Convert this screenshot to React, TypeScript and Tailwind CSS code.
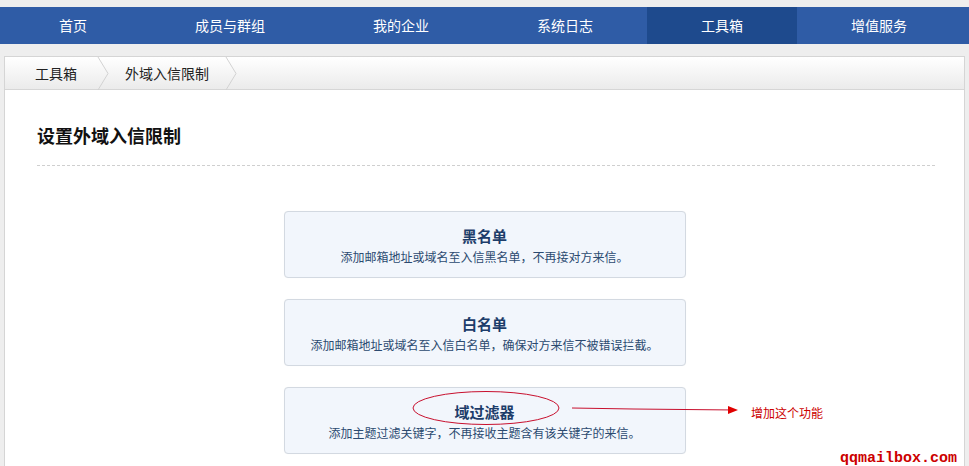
import React from "react";

const CJK = '"Noto Sans CJK SC", "Liberation Sans", sans-serif';

const navItems = ["首页", "成员与群组", "我的企业", "系统日志", "工具箱", "增值服务"];

function Chevron() {
  return (
    <svg width="14" height="33" viewBox="0 0 14 33" className="shrink-0">
      <path d="M1 0 L11 16.5 L1 33" fill="none" stroke="#d2d2d2" strokeWidth="1" />
    </svg>
  );
}

function Card({ title, desc }: { title: string; desc: string }) {
  return (
    <div className="w-[402px] h-[67px] rounded-[4px] border border-[#d3d9e1] bg-[#f2f6fc] flex flex-col items-center pt-[14px] shadow-[0_0_1px_rgba(0,0,0,0.05)]">
      <div className="text-[15px] font-bold leading-[20px] text-[#1d3d6a]">{title}</div>
      <div className="text-[12px] leading-[18px] mt-[2px] text-[#2b4a70]">{desc}</div>
    </div>
  );
}

export default function App() {
  return (
    <div className="w-[969px] h-[466px] bg-[#eeeeee] overflow-hidden relative" style={{ fontFamily: CJK }}>
      <div className="h-[7px]" />
      <nav className="h-[37px] bg-[#2f5ca6] flex pl-[5px]">
        {navItems.map((n, i) => (
          <div
            key={n}
            className={
              "px-[54px] flex items-center text-[14px] text-white " +
              (i === 4 ? "bg-[#1e4a8d]" : "")
            }
          >
            {n}
          </div>
        ))}
      </nav>
      <div className="h-[12px]" />
      <div className="ml-[4px] mr-[4px] border border-[#d5d5d5] bg-white h-[420px]">
        <div className="h-[33px] bg-gradient-to-b from-white to-[#ebebeb] border-b border-[#d6d6d6] flex items-center text-[14px] text-[#222]">
          <div className="pl-[30px] pr-[20px]">工具箱</div>
          <Chevron />
          <div className="pl-[14px] pr-[16px]">外域入信限制</div>
          <Chevron />
        </div>
        <div className="px-[32px]">
          <h1 className="pt-[33px] text-[18px] font-bold leading-[24px] text-[#111]">设置外域入信限制</h1>
          <div className="mt-[18px] border-t border-dashed border-[#cfcfcf] mr-[-3px]" />
        </div>
        <div className="flex flex-col items-center gap-[21px] pt-[45px]">
          <Card title="黑名单" desc="添加邮箱地址或域名至入信黑名单，不再接对方来信。" />
          <Card title="白名单" desc="添加邮箱地址或域名至入信白名单，确保对方来信不被错误拦截。" />
          <Card title="域过滤器" desc="添加主题过滤关键字，不再接收主题含有该关键字的来信。" />
        </div>
      </div>
      <svg className="absolute left-0 top-0 pointer-events-none" width="969" height="466">
        <ellipse cx="486" cy="408" rx="73" ry="16.5" fill="none" stroke="#c8102e" strokeWidth="1" />
        <path d="M572 408 L633 409 L735 410" fill="none" stroke="#c8102e" strokeWidth="1" />
        <path d="M728 406 L738 410 L728 414 Z" fill="#e00000" />
      </svg>
      <div className="absolute left-[751px] top-[404px] text-[12px] leading-[18px] text-[#cc0000]">增加这个功能</div>
      <div
        className="absolute left-[840px] top-[450px] text-[15px] font-bold leading-[18px] text-[#cc0000]"
        style={{ fontFamily: '"Liberation Mono", monospace' }}
      >
        qqmailbox.com
      </div>
    </div>
  );
}
